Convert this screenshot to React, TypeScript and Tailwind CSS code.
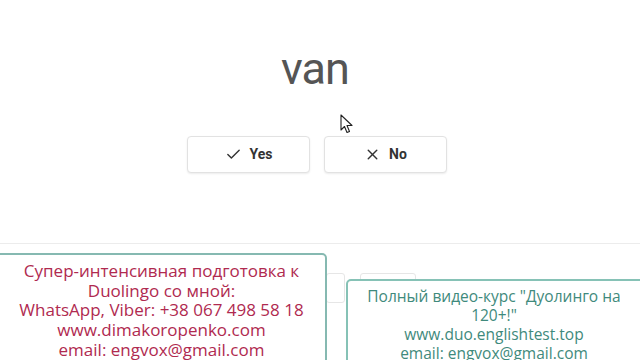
import { Check, X } from "lucide-react";

function Cursor() {
  return (
    <svg className="absolute left-[340px] top-[114px]" width="14" height="21" viewBox="0 0 14 21">
      <path
        d="M1 1 L1 16 L4.5 12.5 L7 18.5 L9.5 17.5 L7 11.5 L12 11.5 Z"
        fill="#fff"
        stroke="#222"
        strokeWidth="1.1"
        strokeLinejoin="round"
      />
    </svg>
  );
}

function AnswerButton({ label, icon }: { label: string; icon: React.ReactNode }) {
  return (
    <button className="flex h-[37px] w-[123px] items-center justify-center gap-[8px] rounded-[4px] border border-[#e2e2e2] bg-white text-[14px] font-bold text-[#333] shadow-[0_1px_2px_rgba(0,0,0,0.08)]">
      {icon}
      <span>{label}</span>
    </button>
  );
}

export default function App() {
  return (
    <div className="relative h-[360px] w-[640px] overflow-hidden bg-white font-['Roboto',sans-serif]">
      <div className="flex flex-col items-center pt-[46px]">
        <h1 className="translate-x-[-5px] text-[45px] leading-none tracking-[-1px] text-[#555]">van</h1>
        <div className="mt-[45px] flex translate-x-[-3px] gap-[14px]">
          <AnswerButton label="Yes" icon={<Check size={17} strokeWidth={2} />} />
          <AnswerButton label="No" icon={<X size={17} strokeWidth={2} />} />
        </div>
      </div>

      {/* page content behind the overlays */}
      <div className="mt-[70px] border-t border-[#ececec]">
        <div className="mt-[29px] flex gap-[15px] pl-[326px]">
          <div className="h-[30px] w-[19px] rounded-[3px] border border-[#e6e6e6]" />
          <div className="h-[30px] w-[56px] rounded-[3px] border border-[#e6e6e6]" />
        </div>
      </div>

      <Cursor />

      {/* promo overlays */}
      <div className="absolute left-[-4px] top-[253px] h-[130px] w-[331px] rounded-[5px] border-2 border-[#86b9b1] bg-white pt-[6px] text-center font-['Open_Sans',sans-serif] text-[17px] leading-[19.7px] text-[#b02a50]">
        <p>Супер-интенсивная подготовка к</p>
        <p>Duolingo со мной:</p>
        <p>WhatsApp, Viber: +38 067 498 58 18</p>
        <p>www.dimakoropenko.com</p>
        <p>email: engvox@gmail.com</p>
      </div>

      <div className="absolute left-[346px] top-[279px] h-[110px] w-[300px] rounded-[5px] border-2 border-[#86c2b6] bg-white pr-[4px] pt-[6px] text-center font-['Open_Sans',sans-serif] text-[15.5px] leading-[19px] text-[#3f8a7c]">
        <p>Полный видео-курс "Дуолинго на</p>
        <p>120+!"</p>
        <p>www.duo.englishtest.top</p>
        <p>email: engvox@gmail.com</p>
      </div>
    </div>
  );
}
